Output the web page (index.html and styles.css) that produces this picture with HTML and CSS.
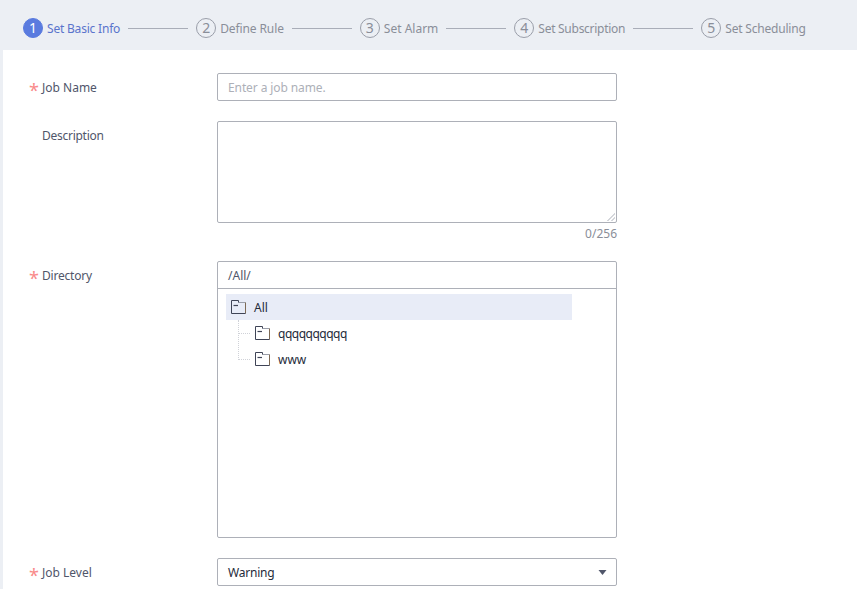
FILE: index.html
```html
<!DOCTYPE html>
<html lang="en">
<head>
<meta charset="utf-8">
<title>Set Basic Info</title>
<link rel="stylesheet" href="styles.css">
</head>
<body>
<div class="page">
  <header class="steps">
    <div class="step active"><span class="num">1</span><span class="step-label narrow">Set Basic Info</span></div>
    <span class="line"></span>
    <div class="step"><span class="num">2</span><span class="step-label slight">Define Rule</span></div>
    <span class="line"></span>
    <div class="step"><span class="num">3</span><span class="step-label">Set Alarm</span></div>
    <span class="line"></span>
    <div class="step"><span class="num">4</span><span class="step-label narrower">Set Subscription</span></div>
    <span class="line"></span>
    <div class="step"><span class="num">5</span><span class="step-label narrow">Set Scheduling</span></div>
  </header>
  <main class="form">
    <div class="row">
      <label class="label required">Job Name</label>
      <div class="field"><input class="input slight" type="text" placeholder="Enter a job name."></div>
    </div>
    <div class="row row-desc">
      <label class="label narrower">Description</label>
      <div class="field">
        <textarea class="textarea"></textarea>
        <div class="counter">0/256</div>
      </div>
    </div>
    <div class="row row-dir">
      <label class="label required narrow">Directory</label>
      <div class="field">
        <div class="picker">
          <div class="picker-value">/All/</div>
          <div class="tree">
            <div class="node root">
              <svg class="folder" viewBox="0 0 15 14"><path d="M7.5 2.5h7" fill="none" stroke="#9a9ea9"/><path d="M14.5 2.5v11" fill="none" stroke="#7d6a55"/><path d="M14.5 13.5H.5V.5h7v2" fill="none" stroke="#3f4456"/><path d="M2.5 5.5h4.5" fill="none" stroke="#3f4456" stroke-width="1.2"/></svg>
              <span>All</span>
            </div>
            <div class="children">
              <div class="node child">
                <svg class="folder" viewBox="0 0 15 14"><path d="M7.5 2.5h7" fill="none" stroke="#9a9ea9"/><path d="M14.5 2.5v11" fill="none" stroke="#7d6a55"/><path d="M14.5 13.5H.5V.5h7v2" fill="none" stroke="#3f4456"/><path d="M2.5 5.5h4.5" fill="none" stroke="#3f4456" stroke-width="1.2"/></svg>
                <span class="repeated">qqqqqqqqqq</span>
              </div>
              <div class="node child">
                <svg class="folder" viewBox="0 0 15 14"><path d="M7.5 2.5h7" fill="none" stroke="#9a9ea9"/><path d="M14.5 2.5v11" fill="none" stroke="#7d6a55"/><path d="M14.5 13.5H.5V.5h7v2" fill="none" stroke="#3f4456"/><path d="M2.5 5.5h4.5" fill="none" stroke="#3f4456" stroke-width="1.2"/></svg>
                <span>www</span>
              </div>
            </div>
          </div>
        </div>
      </div>
    </div>
    <div class="row row-level">
      <label class="label required">Job Level</label>
      <div class="field">
        <div class="select">
          <span class="narrow">Warning</span>
          <svg class="caret" viewBox="0 0 8 5"><path d="M0 0h8L4 5z" fill="#50566a"/></svg>
        </div>
      </div>
    </div>
  </main>
</div>
</body>
</html>
```

FILE: styles.css
```css
* { box-sizing: border-box; }
html, body { margin: 0; height: 100%; }
body {
  background: #eceff4;
  font-family: "Noto Sans", sans-serif;
  font-size: 12px;
  color: #50566a;
  overflow: hidden;
}
.slight { letter-spacing: -0.1px; }
.narrow { letter-spacing: -0.2px; }
.narrower { letter-spacing: -0.27px; }
.repeated { letter-spacing: -0.5px; }
.page { height: 589px; overflow: hidden; }
.steps {
  height: 50px;
  padding: 18px 0 0 23px;
  display: flex;
  align-items: flex-start;
}
.step { display: flex; align-items: center; height: 20px; gap: 4px; color: #8a8e99; }
.step.active { color: #5a74cc; }
.num {
  width: 20px; height: 20px;
  border: 1px solid #9a9ea9;
  border-radius: 50%;
  display: flex; align-items: center; justify-content: center;
  font-size: 14px;
  line-height: 18px;
}
.active .num { background: #5a7bdf; border-color: #5a7bdf; color: #fff; }
.line { width: 60px; height: 1px; background: #a9adb8; margin: 10px 8px 0; }
.form {
  margin-left: 3px;
  background: #fff;
  padding-top: 23px;
  height: 539px;
}
.row { display: flex; }
.row-desc, .row-dir, .row-level { margin-top: 20px; }
.label {
  width: 214px;
  padding: 1px 0 0 39px;
  height: 28px;
  line-height: 28px;
  position: relative;
  color: #50566a;
}
.required::before {
  content: "*";
  position: absolute;
  left: 26px;
  top: 3px;
  color: #f98a8a;
  font-size: 18px;
  letter-spacing: 0;
}
.field { width: 400px; }
.input, .textarea, .select, .picker {
  display: block;
  width: 100%;
  border: 1px solid #adb0b8;
  border-radius: 2px;
  background: #fff;
  font: inherit;
  color: #50566a;
}
.input { height: 28px; padding: 0 10px; outline: none; }
.input::placeholder { color: #adb0b8; opacity: 1; }
.textarea {
  height: 102px;
  padding: 4px 10px;
  outline: none;
  resize: none;
  background:
    linear-gradient(135deg, transparent 0 50%, #d4d6db 50% 60%, transparent 60% 72%, #d4d6db 72% 82%, transparent 82%) no-repeat right 1px bottom 1px / 8px 8px,
    #fff;
}
.counter { height: 18px; padding-top: 1px; line-height: 20px; text-align: right; color: #8a8e99; }
.picker { height: 277px; }
.picker-value {
  height: 27px;
  line-height: 28px;
  padding: 0 10px;
  border-bottom: 1px solid #adb0b8;
}
.tree { padding: 5px 44px 0 8px; }
.node { display: flex; align-items: center; height: 26px; gap: 8px; color: #252b3a; }
.root { background: #e8ecf7; padding-left: 5px; }
.folder { width: 15px; height: 14px; flex: none; }
.children { margin-left: 12px; border-left: 1px dotted #d0d2d8; height: 40px; }
.child { padding-left: 16px; position: relative; }
.child::before {
  content: "";
  position: absolute;
  left: 0; top: 13px;
  width: 11px;
  border-top: 1px dotted #d0d2d8;
}
.select {
  height: 28px;
  padding: 0 9px 0 10px;
  display: flex;
  align-items: center;
  justify-content: space-between;
  color: #252b3a;
}
.caret { width: 9px; height: 5px; }
```
